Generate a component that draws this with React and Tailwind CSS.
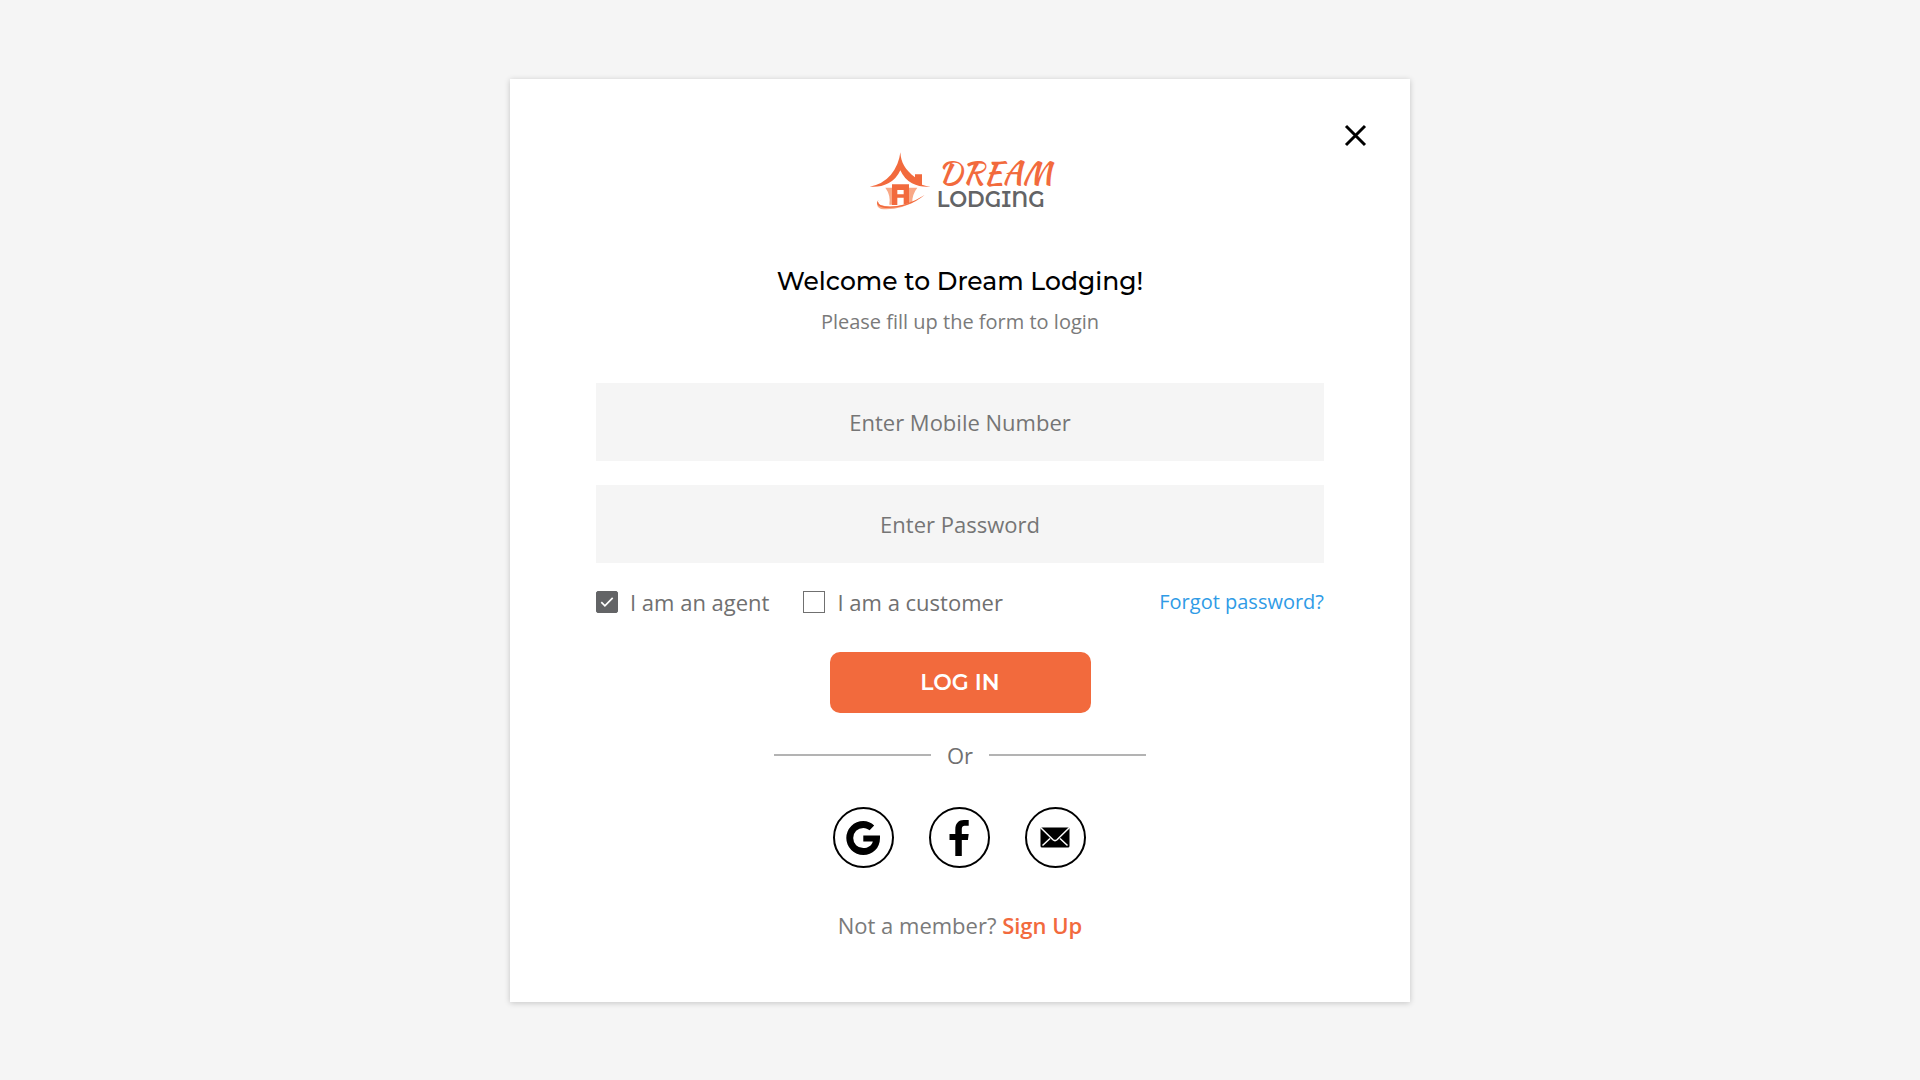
import { useState } from "react";

function Logo() {
  return (
    <svg viewBox="18 33 573 180" className="h-[60px] w-[191px] overflow-visible" role="img" aria-label="Dream Lodging">
      <g transform="translate(3 1)">
        <path fill="#f9a886" d="M76 142h25v51H88q5-28-12-51zM145 142h27q-17 22-15 46l-12 3z" />
        <path fill="#f26a3d" d="M121 36c2 31 14 52 44 75v-9h21v31q12 5 26 6-30 3-56-10-23-12-35-39-12 27-36 39-25 13-56 10 39-7 63-35 25-30 29-68z" />
        <path fill="#f26a3d" fillRule="evenodd" d="M96 132h51v58l-16 2v-20h-19v22H96zM112 149v13h19v-13z" />
        <path fill="#f9a886" d="M66 177q-16 10-5 17 42 13 114-16-59 34-112 28-24-10 3-29z" />
        <path fill="#f26a3d" d="M55 179q-7 14 19 19 55 7 120-34-49 40-118 39-35-6-21-24z" />
      </g>
      <text x="236" y="133" fill="#f26a3d" fontSize="94" fontFamily="'Kaushan Script', 'Playball', 'Liberation Serif', serif">DREAM</text>
      <text x="233" y="201" fill="#636466" fontSize="64" fontWeight="600" fontFamily="'Montserrat Alternates', 'Montserrat', 'Inter', sans-serif">LODGING</text>
    </svg>
  );
}

function Field({ label, ...props }) {
  return (
    <input
      aria-label={label}
      placeholder={label}
      className="h-[78px] w-full bg-[#f5f5f5] px-6 text-center text-[22px] text-[#707070] outline-none placeholder:text-[#757575] placeholder:opacity-100"
      {...props}
    />
  );
}

function Check({ label, checked, onChange }) {
  return (
    <label className="flex cursor-pointer items-center gap-3">
      <span className="grid size-[22px] place-items-center">
        <input
          type="checkbox"
          checked={checked}
          onChange={onChange}
          className="col-start-1 row-start-1 size-[22px] appearance-none border border-[#707070] bg-white checked:rounded-[2px] checked:border-[#636466] checked:bg-[#636466]"
        />
        {checked && (
          <svg viewBox="0 0 22 22" className="pointer-events-none col-start-1 row-start-1 size-[22px]" fill="none" stroke="#fff" strokeWidth="1.7">
            <path d="M5.3 11.2l3.6 3.6 7.8-8" />
          </svg>
        )}
      </span>
      <span>{label}</span>
    </label>
  );
}

function Social({ label, children }) {
  return (
    <button type="button" aria-label={label} className="grid size-[61px] place-items-center rounded-full border-2 border-black text-black">
      {children}
    </button>
  );
}

export default function App() {
  const [agent, setAgent] = useState(true);
  const [customer, setCustomer] = useState(false);

  return (
    <div className="flex min-h-screen flex-col items-center bg-[#f5f5f5] pb-10 pt-[79px] font-['Open_Sans',sans-serif]">
      <main className="flex w-full max-w-[900px] flex-col bg-white pb-[62px] pt-11 shadow-[0_1px_6px_rgba(0,0,0,0.2)]">
        <button type="button" aria-label="Close" className="mr-[43px] size-6 self-end">
          <svg viewBox="0 0 24 24" className="size-6" fill="none" stroke="#000" strokeWidth="3">
            <path d="M3 3l19 19M22 3l-19 19" />
          </svg>
        </button>

        <header className="mt-1 flex flex-col items-center">
          <Logo />
          <h1 className="mt-[54px] font-['Montserrat','Inter',sans-serif] text-[25px] font-medium leading-8 text-black">Welcome to Dream Lodging!</h1>
          <p className="mt-[11px] text-xl leading-7 text-[#7a7a7a]">Please fill up the form to login</p>
        </header>

        <form className="mt-[47px] flex flex-col px-[86px]" onSubmit={(e) => e.preventDefault()}>
          <div className="flex flex-col gap-6">
            <Field label="Enter Mobile Number" type="tel" />
            <Field label="Enter Password" type="password" />
          </div>

          <div className="mt-6 flex flex-wrap items-center justify-between text-[22px] leading-[30px] text-[#707070]">
            <div className="flex flex-wrap gap-[34px]">
              <Check label="I am an agent" checked={agent} onChange={() => setAgent(!agent)} />
              <Check label="I am a customer" checked={customer} onChange={() => setCustomer(!customer)} />
            </div>
            <a href="#forgot" className="text-xl leading-[30px] text-[#2f9be6]">Forgot password?</a>
          </div>

          <button type="submit" className="mt-[35px] h-[61px] w-[261px] self-center rounded-[10px] bg-[#f26a3d] font-['Montserrat','Inter',sans-serif] text-[22px] font-semibold text-white">
            LOG IN
          </button>
        </form>

        <div className="mt-[27px] flex items-center justify-center gap-4 text-[22px] leading-[30px] text-[#707070]">
          <span className="h-[2px] w-[157px] bg-[#b3b3b3]" />
          <span>Or</span>
          <span className="h-[2px] w-[157px] bg-[#b3b3b3]" />
        </div>

        <div className="mt-[37px] flex justify-center gap-[35px] pr-[2px]">
          <Social label="Continue with Google">
            <svg viewBox="0 0 36 36" className="size-9" fill="currentColor">
              <path d="M35 15.500H18.300v6h9.500c-1 4.200-4.800 6.600-9.500 6.600A10.100 10.100 0 0 1 18.300 7.900c2.400 0 4.600.9 6.300 2.400l4.600-4.900A16.700 16.700 0 0 0 18.300 1A17 17 0 1 0 18.300 35C27.500 35 35 28.300 35 18z" />
            </svg>
          </Social>
          <Social label="Continue with Facebook">
            <svg viewBox="0 0 36 36" className="size-9" fill="currentColor">
              <path d="M14.300 36V20H8.500v-6h5.800V9.500C14.300 3.200 17.800 0 22.700 0h5v5.800h-3.300c-3 0-3.600 1.400-3.600 3.800V14h6.900l-.8 6h-6.100v16z" />
            </svg>
          </Social>
          <Social label="Continue with email">
            <svg viewBox="0 0 30 21" className="h-[21px] w-[30px]">
              <rect x=".5" y=".5" width="29" height="20" rx="1.500" fill="#000" />
              <path d="M1 1l12 11.700q2 1.800 4 0L29 1M2.500 18.500l7.500-7M27.500 18.500l-7.500-7" fill="none" stroke="#fff" strokeWidth="1.500" />
            </svg>
          </Social>
        </div>

        <p className="mt-[42px] text-center text-[22px] leading-[30px] text-[#7a7a7a]">
          Not a member?{" "}
          <a href="#signup" className="font-semibold text-[#f26a3d]">Sign Up</a>
        </p>
      </main>
    </div>
  );
}
